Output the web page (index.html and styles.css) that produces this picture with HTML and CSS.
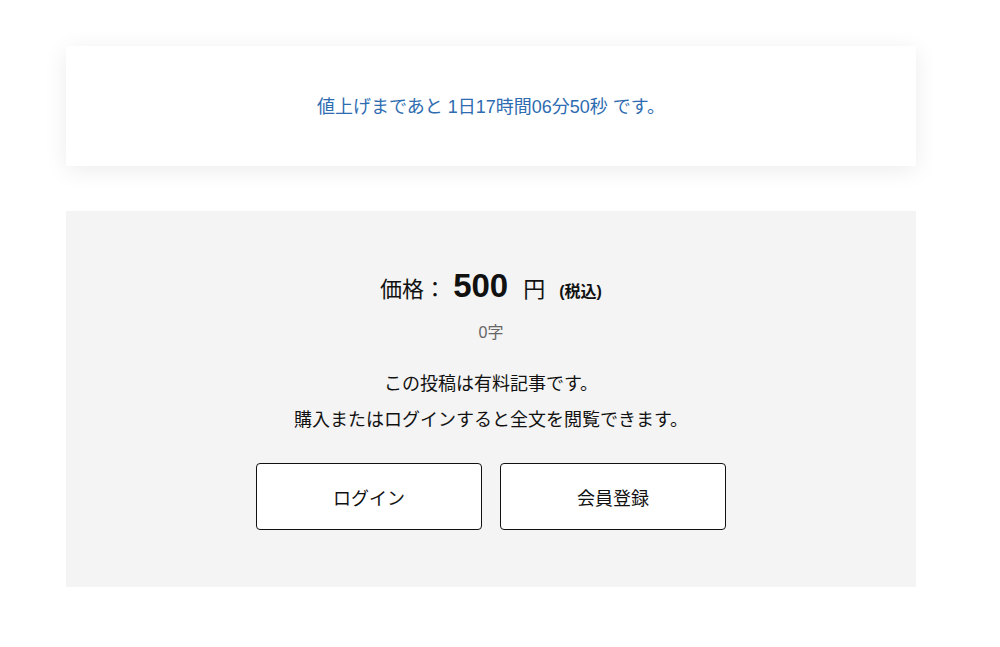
FILE: index.html
```html
<!DOCTYPE html>
<html lang="ja">
<head>
<meta charset="utf-8">
<link rel="stylesheet" href="styles.css">
</head>
<body>
<div class="wrap">
  <div class="notice">値上げまであと 1日17時間06分50秒 です。</div>
  <div class="paywall">
    <div class="price"><span class="label">価格：</span><span class="amount">500</span><span class="yen">円</span><span class="tax">(税込)</span></div>
    <div class="count">0字</div>
    <p class="msg">この投稿は有料記事です。</p>
    <p class="msg">購入またはログインすると全文を閲覧できます。</p>
    <div class="buttons">
      <a class="btn">ログイン</a>
      <a class="btn">会員登録</a>
    </div>
  </div>
</div>
</body>
</html>
```
FILE: styles.css
```css
html, body {
  margin: 0;
  padding: 0;
  background: #fff;
  font-family: "Liberation Sans", "Noto Sans CJK JP", sans-serif;
  color: #111;
}
.wrap {
  width: 850px;
  margin-left: 66px;
  padding-top: 46px;
}
.notice {
  height: 120px;
  background: #fff;
  box-shadow: 0 4px 22px rgba(0,0,0,0.08);
  display: flex;
  align-items: center;
  justify-content: center;
  color: #2e6cb1;
  font-size: 18px;
  padding-bottom: 2px;
  box-sizing: border-box;
}
.paywall {
  margin-top: 45px;
  height: 376px;
  background: #f4f4f4;
  box-sizing: border-box;
  padding-top: 56px;
  display: flex;
  flex-direction: column;
  align-items: center;
}
.price {
  display: flex;
  align-items: baseline;
  height: 38px;
}
.label { font-size: 22px; }
.amount { font-size: 33px; font-weight: bold; margin-left: 7px; }
.yen { font-size: 22px; margin-left: 15px; }
.tax { font-size: 16px; font-weight: bold; margin-left: 14px; }
.count {
  margin-top: 14px;
  font-size: 16px;
  color: #666;
}
.msg {
  margin: 0;
  font-size: 18px;
  line-height: 36px;
}
.count + .msg { margin-top: 23px; }
.buttons {
  display: flex;
  gap: 18px;
  margin-top: 25px;
}
.btn {
  width: 226px;
  height: 67px;
  box-sizing: border-box;
  border: 1px solid #111;
  border-radius: 4px;
  background: #fff;
  display: flex;
  align-items: center;
  justify-content: center;
  font-size: 18px;
  color: #111;
}
```
